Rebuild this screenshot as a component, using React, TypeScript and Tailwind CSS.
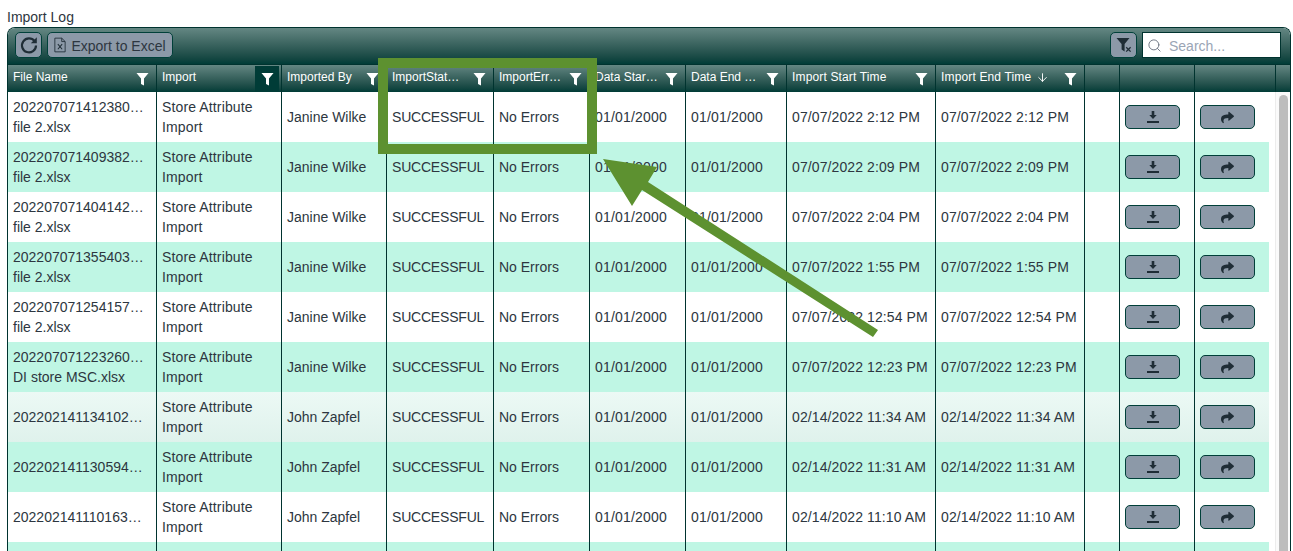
import { ArrowDown, Search } from "lucide-react";
import { FaShare } from "react-icons/fa";

const bodyCols = "grid grid-cols-[149px_125px_105px_107px_96px_96px_101px_149px_149px_35px_75px_74px]";
const headCols = "grid grid-cols-[149px_125px_105px_107px_96px_96px_101px_149px_149px_35px_75px_81px_1fr]";
const barBg = "bg-gradient-to-b from-[#648783] to-[#003c37]";
const greyBtn = "flex items-center justify-center rounded-[5px] border border-[#004039] bg-[#8c99a8]";
const mint = "bg-[#bff6e4]";

type Row = {
  file: string[];
  by: string;
  start: string;
  end: string;
  bg: string;
};

const rows: Row[] = [
  { file: ["202207071412380…", "file 2.xlsx"], by: "Janine Wilke", start: "07/07/2022 2:12 PM", end: "07/07/2022 2:12 PM", bg: "bg-white" },
  { file: ["202207071409382…", "file 2.xlsx"], by: "Janine Wilke", start: "07/07/2022 2:09 PM", end: "07/07/2022 2:09 PM", bg: mint },
  { file: ["202207071404142…", "file 2.xlsx"], by: "Janine Wilke", start: "07/07/2022 2:04 PM", end: "07/07/2022 2:04 PM", bg: "bg-white" },
  { file: ["202207071355403…", "file 2.xlsx"], by: "Janine Wilke", start: "07/07/2022 1:55 PM", end: "07/07/2022 1:55 PM", bg: mint },
  { file: ["202207071254157…", "file 2.xlsx"], by: "Janine Wilke", start: "07/07/2022 12:54 PM", end: "07/07/2022 12:54 PM", bg: "bg-white" },
  { file: ["202207071223260…", "DI store MSC.xlsx"], by: "Janine Wilke", start: "07/07/2022 12:23 PM", end: "07/07/2022 12:23 PM", bg: mint },
  { file: ["202202141134102…"], by: "John Zapfel", start: "02/14/2022 11:34 AM", end: "02/14/2022 11:34 AM", bg: "bg-gradient-to-b from-[#ecf9f5] to-[#dff2ec]" },
  { file: ["202202141130594…"], by: "John Zapfel", start: "02/14/2022 11:31 AM", end: "02/14/2022 11:31 AM", bg: mint },
  { file: ["202202141110163…"], by: "John Zapfel", start: "02/14/2022 11:10 AM", end: "02/14/2022 11:10 AM", bg: "bg-white" },
];

function FunnelIcon({ className }: { className?: string }) {
  return (
    <svg viewBox="0 0 14 14" className={className} fill="currentColor">
      <path d="M0.5 0.5h13L8.6 6.5V14L5.4 12.4V6.5z" />
    </svg>
  );
}

function RefreshIcon() {
  return (
    <svg viewBox="0 0 20 20" className="h-[20px] w-[20px] text-[#1f2d36]" fill="none" stroke="currentColor">
      <path d="M15.6 6.2A7 7 0 1 0 17 10.5" strokeWidth="2.2" />
      <path d="M17.8 2.2v6h-6z" fill="currentColor" stroke="none" />
    </svg>
  );
}

function ExcelIcon() {
  return (
    <svg viewBox="0 0 14 18" className="h-[16px] w-[12px] text-[#1f2d36]" fill="none" stroke="currentColor">
      <path d="M1 1h8l4 4v12H1z" strokeWidth="1" />
      <path d="M9 1v4h4" strokeWidth="1" />
      <path d="M4.5 8l5 6M9.5 8l-5 6" strokeWidth="1.2" />
    </svg>
  );
}

function ClearFilterIcon() {
  return (
    <svg viewBox="0 0 16 16" className="h-[16px] w-[16px] text-[#1f2d36]" fill="currentColor">
      <path d="M0.5 1h13L8.6 7v7.5L5.6 12.6V7z" />
      <path d="M10.2 10.2l4.4 4.4M14.6 10.2l-4.4 4.4" stroke="currentColor" strokeWidth="1.3" fill="none" />
    </svg>
  );
}

function DownloadIcon() {
  return (
    <svg viewBox="0 0 14 14" className="h-[14px] w-[14px] text-[#1f2d36]" fill="currentColor">
      <path d="M5.7 1h2.6v4h2.4L7 9 3.3 5h2.4z" />
      <path d="M1 11h12v2H1z" />
    </svg>
  );
}

type HeadCellProps = {
  label?: string;
  filter?: boolean;
  active?: boolean;
  sorted?: boolean;
  wide?: boolean;
};

function HeadCell({ label, filter, active, sorted, wide }: HeadCellProps) {
  return (
    <div className="relative flex h-full items-center border-r border-[#00332f] pl-[5px] text-xs text-white">
      {label && <span className={"-mt-[4px] whitespace-nowrap " + (wide ? "tracking-[0.15px]" : "")}>{label}</span>}
      {sorted && <ArrowDown className="-mt-[3px] ml-[5px] h-[13px] w-[13px]" strokeWidth={1.75} />}
      {filter && (
        <span
          className={
            "absolute top-[1px] right-[2px] flex h-[26px] w-[24px] items-center justify-center " +
            (active ? "bg-[#003c37]" : "")
          }
        >
          <FunnelIcon className="h-[14px] w-[13px]" />
        </span>
      )}
    </div>
  );
}

function Cell({ children, className }: { children?: React.ReactNode; className?: string }) {
  return (
    <div
      className={
        "flex h-full flex-col justify-center border-r border-[#00332f] pl-[5px] text-sm leading-5 whitespace-nowrap text-[#2d3640] " +
        (className ?? "")
      }
    >
      {children}
    </div>
  );
}

function ActionButton({ children, last }: { children: React.ReactNode; last?: boolean }) {
  return (
    <div className={"flex h-full items-center pl-[5px] " + (last ? "" : "border-r border-[#00332f]")}>
      <span className={greyBtn + " h-[24px] w-[55px]"}>{children}</span>
    </div>
  );
}

function BlankRow() {
  return (
    <div className={mint + " " + bodyCols + " h-[50px]"}>
      {[0, 1, 2, 3, 4, 5, 6, 7, 8, 9, 10].map((i) => (
        <Cell key={i} />
      ))}
    </div>
  );
}

export default function App() {
  return (
    <div className="relative h-[551px] w-[1293px] overflow-hidden bg-white font-['Liberation_Sans',Arial,sans-serif]">
      <div className="h-[27px] pt-[9px] pl-[7px] text-sm leading-4 text-[#2d3640]">Import Log</div>

      <div className="mr-[2px] ml-[7px] rounded-t-[8px] border-x border-t border-[#00332f]">
        <div className={barBg + " flex h-[36px] items-start gap-[5px] rounded-t-[7px] pt-[4px] pr-[9px] pl-[7px]"}>
          <span className={greyBtn + " h-[26px] w-[27px]"}>
            <RefreshIcon />
          </span>
          <span className={greyBtn + " h-[26px] w-[126px] gap-[5px] text-sm text-[#2d3640]"}>
            <ExcelIcon />
            <span className="mt-[1px]">Export to Excel</span>
          </span>
          <span className={greyBtn + " ml-auto h-[26px] w-[27px]"}>
            <ClearFilterIcon />
          </span>
          <div className="flex h-[26px] w-[139px] items-center gap-[7px] border border-[#00332f] bg-white pl-[4px] text-sm text-[#9aa5b5]">
            <Search className="h-[15px] w-[15px] text-[#6b7280]" strokeWidth={1.5} />
            <span className="mt-[1px]">Search...</span>
          </div>
        </div>

        <div className={barBg + " " + headCols + " h-[28px] border-t border-[#00332f]"}>
          <HeadCell label="File Name" filter />
          <HeadCell label="Import" filter active />
          <HeadCell label="Imported By" filter />
          <HeadCell label="ImportStat…" filter />
          <HeadCell label="ImportErr…" filter />
          <HeadCell label="Data Star…" filter />
          <HeadCell label="Data End …" filter />
          <HeadCell label="Import Start Time" filter wide />
          <HeadCell label="Import End Time" filter sorted wide />
          <HeadCell />
          <HeadCell />
          <HeadCell />
        </div>

        <div className="flex">
          <div className="w-[1261px] shrink-0">
            {rows.map((row) => (
              <div key={row.file[0]} className={row.bg + " " + bodyCols + " h-[50px]"}>
                <Cell>
                  {row.file.map((line) => (
                    <span key={line}>{line}</span>
                  ))}
                </Cell>
                <Cell className="tracking-[0.13px]">
                  <span>Store Attribute</span>
                  <span>Import</span>
                </Cell>
                <Cell>{row.by}</Cell>
                <Cell className="tracking-[-0.2px]">SUCCESSFUL</Cell>
                <Cell>No Errors</Cell>
                <Cell className="tracking-[0.2px]">01/01/2000</Cell>
                <Cell className="tracking-[0.2px]">01/01/2000</Cell>
                <Cell className="tracking-[0.1px]">{row.start}</Cell>
                <Cell className="tracking-[0.1px]">{row.end}</Cell>
                <Cell />
                <ActionButton>
                  <DownloadIcon />
                </ActionButton>
                <ActionButton last>
                  <FaShare className="h-[13px] w-[13px] text-[#1f2d36]" />
                </ActionButton>
              </div>
            ))}
            <BlankRow />
          </div>
          <div className="ml-[6px] flex-1 border-l border-[#ececec] bg-[#fafafa] pt-[3px] pl-[3px]">
            <div className="h-[800px] w-[9px] rounded-full bg-[#bdbdbd]" />
          </div>
        </div>
      </div>

      {/* annotation drawn over the table */}
      <div className="pointer-events-none absolute top-[58px] left-[378px] h-[96px] w-[219px] border-[10px] border-[#5d9130]" />
      <svg className="pointer-events-none absolute top-0 left-0 h-[551px] w-[1293px]" viewBox="0 0 1293 551">
        <polygon points="603,159 657,167 648,182 878,330 873,337 642,190 632,206" fill="#5d9130" />
      </svg>
    </div>
  );
}
